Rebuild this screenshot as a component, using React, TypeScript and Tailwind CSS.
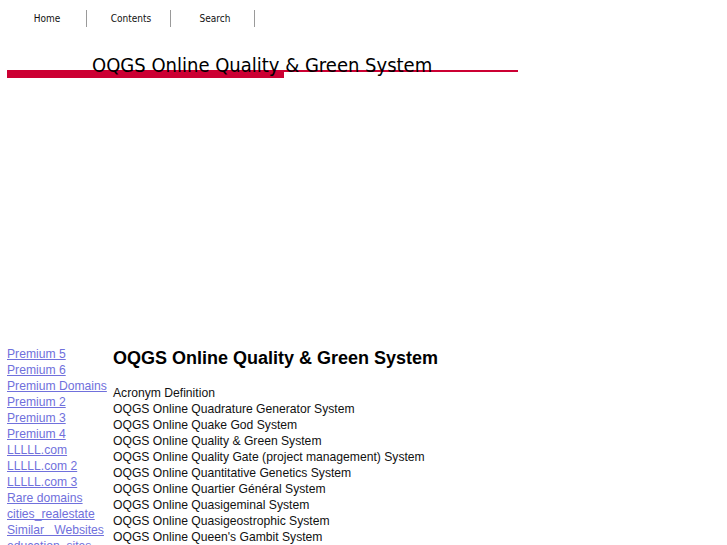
const NAV = ["Home", "Contents", "Search"];

const LINKS = [
  "Premium 5",
  "Premium 6",
  "Premium Domains",
  "Premium 2",
  "Premium 3",
  "Premium 4",
  "LLLLL.com",
  "LLLLL.com 2",
  "LLLLL.com 3",
  "Rare domains",
  "cities_realestate",
  "Similar   Websites",
  "education_sites",
];

const ROWS = [
  "Acronym Definition",
  "OQGS Online Quadrature Generator System",
  "OQGS Online Quake God System",
  "OQGS Online Quality & Green System",
  "OQGS Online Quality Gate (project management) System",
  "OQGS Online Quantitative Genetics System",
  "OQGS Online Quartier Général System",
  "OQGS Online Quasigeminal System",
  "OQGS Online Quasigeostrophic System",
  "OQGS Online Queen's Gambit System",
];

export default function App() {
  return (
    <div className="bg-white min-h-screen text-black">
      {/* Top nav */}
      <div className="flex pl-[3px] pt-[10px]">
        {NAV.map((item) => (
          <div
            key={item}
            className="w-[84px] h-[17px] pl-[5px] flex items-center justify-center border-r border-[#9a9a9a] text-[10px] text-[#111]"
            style={{ fontFamily: '"DejaVu Sans Condensed", "DejaVu Sans", sans-serif' }}
          >
            {item}
          </div>
        ))}
      </div>

      {/* Title with red rule */}
      <div className="pl-[7px] mt-[26px] w-[518px]">
        <div
          className="relative z-10 pl-[85px] -mb-[7px] text-[20px] leading-[24px] text-black"
          style={{ fontFamily: '"DejaVu Sans Condensed", "DejaVu Sans", sans-serif' }}
        >
          OQGS Online Quality &amp; Green System
        </div>
        <div className="flex items-start">
          <div className="w-[277px] h-[8px] bg-[#cc0033]" />
          <div className="flex-1 h-[2px] bg-[#cc0033]" />
        </div>
      </div>

      {/* Ad slot */}
      <div className="h-[268px]" />

      {/* Body */}
      <div
        className="flex pl-[7px] text-[12.15px] leading-[16px]"
        style={{ fontFamily: '"Liberation Sans", Arial, sans-serif' }}
      >
        <div className="w-[106px] shrink-0 flex flex-col">
          {LINKS.map((l) => (
            <a key={l} href="#" className="underline text-[#7070dc] whitespace-pre">
              {l}
            </a>
          ))}
        </div>
        <div className="text-[#111]">
          <h1 className="text-[18px] leading-[24px] font-bold mb-[15px] text-black">
            OQGS Online Quality &amp; Green System
          </h1>
          {ROWS.map((r) => (
            <div key={r}>{r}</div>
          ))}
        </div>
      </div>
    </div>
  );
}
